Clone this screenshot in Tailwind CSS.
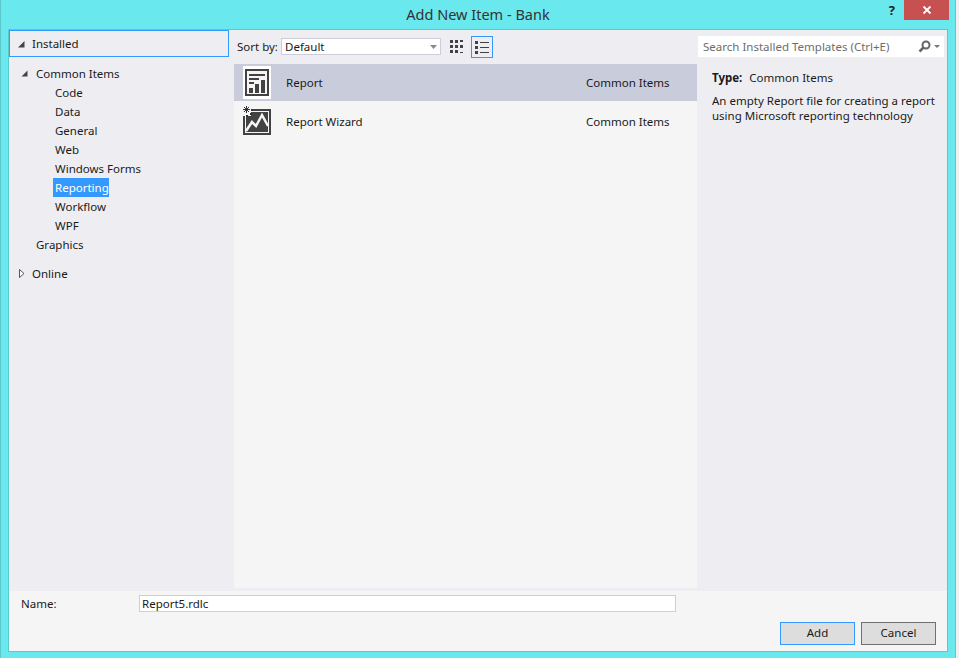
<!DOCTYPE html>
<html lang="en">
<head>
    <meta charset="UTF-8">
    <title>Add New Item - Bank</title>
    <script src="https://cdn.jsdelivr.net/npm/@tailwindcss/browser@4"></script>
</head>
<body class="w-[959px] h-[658px] overflow-hidden bg-[#f0f0f0] font-['Noto_Sans',sans-serif] text-[11.5px] text-[#1a1a1a]">

<div class="w-[956px] h-[658px] bg-[#69e8ed] flex flex-col pl-[7px] pr-[7px] pb-[6px] border-x border-[#5cc8cc]">

    <!-- title bar -->
    <div class="h-[29px] shrink-0 flex items-start">
        <div class="flex-1"></div>
        <div class="w-[400px] text-center text-[14.5px] leading-[29px] text-[#333]">Add New Item - Bank</div>
        <div class="flex-1 flex justify-end">
            <span class="mr-[9px] mt-[1px] text-[13px] leading-[18px] font-bold text-[#222]">?</span>
            <div class="w-[45px] h-[20px] bg-[#c75050] flex items-center justify-center mr-[-1px]">
                <svg width="10" height="10" viewBox="0 0 10 10"><path d="M1.5 1.5 L8.5 8.5 M8.5 1.5 L1.5 8.5" stroke="#fff" stroke-width="1.8" fill="none"/></svg>
            </div>
        </div>
    </div>

    <!-- dialog body -->
    <div class="flex-1 flex flex-col border border-[#5cc8cc] bg-[#eeeef2] min-h-0">
        <div class="flex-1 flex min-h-0">

            <!-- left tree -->
            <div class="w-[225px] shrink-0">
                <div class="h-[27px] w-[220px] border border-[#3399ff] flex items-center pl-[7px] gap-[7px]">
                    <svg width="8" height="8" viewBox="0 0 8 8"><path d="M7.5 1 V7.5 H1 Z" fill="#444"/></svg>
                    <span>Installed</span>
                </div>
                <div class="mt-[7px] pl-[12px] flex flex-col">
                    <div class="h-[19px] flex items-center gap-[9px]">
                        <svg width="7" height="7" viewBox="0 0 7 7"><path d="M6.5 .5 V6.5 H.5 Z" fill="#444"/></svg>
                        <span class="-ml-[1px]">Common Items</span>
                    </div>
                    <div class="pl-[32px] flex flex-col">
                        <div class="h-[19px] leading-[19px] px-[2px] w-fit">Code</div>
                        <div class="h-[19px] leading-[19px] px-[2px] w-fit">Data</div>
                        <div class="h-[19px] leading-[19px] px-[2px] w-fit">General</div>
                        <div class="h-[19px] leading-[19px] px-[2px] w-fit">Web</div>
                        <div class="h-[19px] leading-[19px] px-[2px] w-fit">Windows Forms</div>
                        <div class="h-[19px] leading-[19px] px-[2px] w-[56px] bg-[#3399ff] text-white">Reporting</div>
                        <div class="h-[19px] leading-[19px] px-[2px] w-fit">Workflow</div>
                        <div class="h-[19px] leading-[19px] px-[2px] w-fit">WPF</div>
                    </div>
                    <div class="h-[19px] leading-[19px] pl-[15px]">Graphics</div>
                </div>
                <div class="mt-[10px] h-[19px] flex items-center pl-[10px] gap-[7px]">
                    <svg width="6" height="9" viewBox="0 0 6 9"><path d="M.5 .5 L5 4.5 L.5 8.5 Z" fill="#fff" stroke="#555"/></svg>
                    <span>Online</span>
                </div>
            </div>

            <!-- centre column -->
            <div class="w-[463px] shrink-0 flex flex-col">
                <div class="h-[34px] shrink-0 flex items-start pt-[8px] pl-[3px]">
                    <span class="w-[44px] leading-[17px]">Sort by:</span>
                    <div class="w-[160px] h-[17px] bg-white border border-[#cccedb] flex items-center justify-between px-[3px]">
                        <span class="leading-[15px]">Default</span>
                        <svg width="7" height="4" viewBox="0 0 7 4"><path d="M0 0 H7 L3.5 4 Z" fill="#888"/></svg>
                    </div>
                    <div class="ml-[9px] mt-[1px] w-[15px] h-[15px]">
                        <svg width="15" height="15" viewBox="0 0 15 15" fill="#424242">
                            <path d="M0 1h3v3H0zM5 1h3v3H5zM10 1h3v2h-3zM0 6h3v3H0zM5 6h3v3H5zM10 6h3v3h-3zM0 11h3v3H0zM5 11h3v3H5zM10 13h3v1h-3z"/>
                        </svg>
                    </div>
                    <div class="ml-[6px] -mt-[2px] w-[22px] h-[22px] border border-[#3399ff] flex items-center justify-center">
                        <svg width="14" height="14" viewBox="0 0 14 14" fill="#424242">
                            <path d="M0 1h3v3H0zM5 2h9v1H5zM0 6h3v3H0zM5 7h9v1H5zM0 11h3v3H0zM5 12h9v1H5z"/>
                        </svg>
                    </div>
                </div>
                <div class="h-[524px] bg-[#f5f5f5]">
                    <div class="h-[37px] bg-[#c9ccdb] flex items-center pl-[9px]">
                        <svg class="mr-[15px] shrink-0" width="28" height="33" viewBox="0 0 28 33">
                            <rect width="28" height="33" fill="#fff"/>
                            <rect x="2" y="3" width="24" height="27" fill="#424242"/>
                            <rect x="4" y="5" width="20" height="23" fill="#f5f5f5"/>
                            <rect x="6" y="8" width="16" height="2" fill="#424242"/>
                            <rect x="6" y="12" width="10" height="2" fill="#424242"/>
                            <rect x="6" y="16" width="5" height="2" fill="#424242"/>
                            <rect x="6" y="22" width="4" height="5" fill="#424242"/>
                            <rect x="12" y="18" width="4" height="9" fill="#424242"/>
                            <rect x="18" y="14" width="4" height="13" fill="#424242"/>
                        </svg>
                        <span class="w-[300px] pt-[1px]">Report</span>
                        <span class="pt-[1px]">Common Items</span>
                    </div>
                    <div class="h-[42px] flex items-center pl-[9px]">
                        <svg class="mr-[15px] shrink-0 -mt-[3px]" width="28" height="30" viewBox="0 0 28 30">
                            <rect x="0" y="3" width="28" height="26" fill="#424242"/>
                            <rect x="2" y="5" width="24" height="22" fill="#f5f5f5"/>
                            <rect x="3" y="6" width="22" height="20" fill="#424242"/>
                            <path d="M3 25 L9 16 L13 20 L19 9 L25 20" stroke="#f5f5f5" stroke-width="2.5" fill="none"/>
                            <path d="M0 0h8v10H0z" fill="#f5f5f5"/>
                            <path d="M1 1 L6 6 M6 1 L1 6 M3.5 0 V7 M0 3.5 H7" stroke="#333" stroke-width="1"/>
                            <path d="M7 7h2v2H7zM3 9h2v2H3zM8 3h2v2H8z" fill="#333"/>
                        </svg>
                        <span class="w-[300px]">Report Wizard</span>
                        <span>Common Items</span>
                    </div>
                </div>
            </div>

            <!-- right column -->
            <div class="flex-1 min-w-0 pl-[1px]">
                <div class="mt-[6px] w-[246px] h-[21px] bg-white flex items-center pl-[5px] pr-[4px] justify-between">
                    <span class="text-[#6d6d6d] pt-[1px]">Search Installed Templates (Ctrl+E)</span>
                    <div class="flex items-center gap-[3px]">
                        <svg width="13" height="13" viewBox="0 0 13 13"><circle cx="8" cy="5" r="3.5" fill="none" stroke="#666" stroke-width="2"/><path d="M5.5 7.5 L1.5 11.5" stroke="#666" stroke-width="2.5"/></svg>
                        <svg width="6" height="3" viewBox="0 0 6 3"><path d="M0 0 H6 L3 3 Z" fill="#777"/></svg>
                    </div>
                </div>
                <div class="pl-[14px] pt-[12px]">
                    <div class="h-[17px] leading-[17px]"><span class="font-bold mr-[7px]">Type:</span>Common Items</div>
                    <p class="mt-[7px] leading-[15px] w-[230px]">An empty Report file for creating a report using Microsoft reporting technology</p>
                </div>
            </div>
        </div>

        <!-- name + buttons -->
        <div class="h-[60px] shrink-0 bg-[#f5f5f5] mt-[3px]">
            <div class="flex items-center pt-[4px] pl-[12px]">
                <span class="w-[118px]">Name:</span>
                <div class="w-[537px] h-[17px] bg-white border border-[#cccedb] pl-[2px] leading-[15px]">Report5.rdlc</div>
            </div>
            <div class="flex justify-end gap-[6px] pr-[11px] mt-[10px]">
                <button class="w-[75px] h-[23px] bg-[#dddddd] border border-[#3399ff] pb-[2px]">Add</button>
                <button class="w-[75px] h-[23px] bg-[#dddddd] border border-[#707070] pb-[2px]">Cancel</button>
            </div>
        </div>
    </div>
</div>

</body>
</html>
